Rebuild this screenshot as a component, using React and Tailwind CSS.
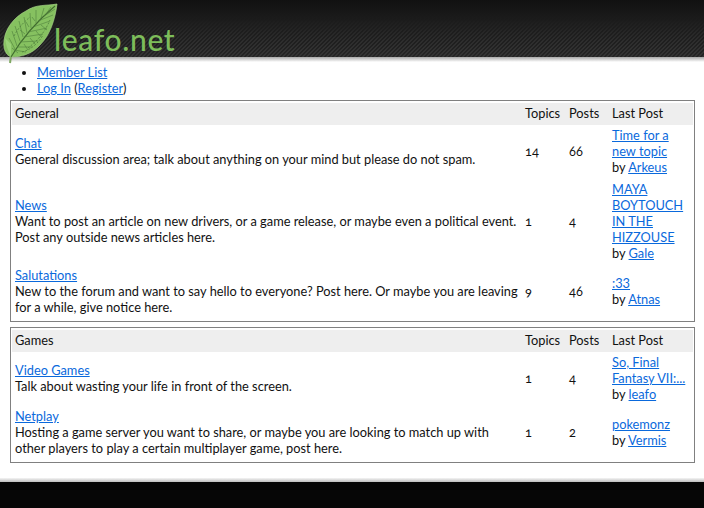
const font = "font-['Lato','Open_Sans',sans-serif]";

function Leaf() {
  const veins = [
    "M15 49 L9 38", "M17 46 L12 31", "M20 41 L15 26", "M23 37 L19 21", "M27 33 L24 17", "M31 28 L30 13", "M36 23 L36 10", "M41 18 L44 8", "M46 14 L51 7",
    "M14 50 L26 52", "M17 47 L32 47", "M20 42 L38 41", "M24 37 L43 34", "M28 32 L47 28", "M33 27 L50 21", "M38 21 L53 15", "M44 16 L55 9",
    "M12 48 L18 53", "M24 44 L28 50", "M30 38 L35 44", "M36 31 L41 37", "M41 25 L47 30", "M20 30 L25 34", "M26 22 L29 27", "M32 17 L35 21",
  ];
  return (
    <svg width="60" height="66" viewBox="0 0 60 66" className="absolute left-0 top-0 z-10">
      <path d="M10 63 L11 56" stroke="#7fa862" strokeWidth="2" fill="none" />
      <path d="M57 4 C46 6 36 4 26 11 C14 17 5 29 4 41 C3 49 6 55 11 57 C21 57 32 54 40 45 C50 35 55 20 57 4 Z" fill="#86c160" stroke="#a5d485" strokeWidth="0.7" />
      <path d="M11 57 C8 50 6 46 5 38 L11 44 Z" fill="#9ad277" />
      <path d="M11 57 C18 45 30 27 55 6" stroke="#3f6a2e" strokeWidth="1.1" fill="none" />
      {veins.map((d) => (
        <path key={d} d={d} stroke="#4f7f3c" strokeWidth="0.8" fill="none" opacity="0.75" />
      ))}
      <path d="M22 52 C30 50 38 44 43 35 M14 36 C18 28 24 22 30 17 M28 48 C36 42 44 34 50 20" stroke="#4f7f3c" strokeWidth="0.8" strokeDasharray="2 1.5" fill="none" />
    </svg>
  );
}

function A({ children }) {
  return <a href="#" className="text-[#0a69dc] underline">{children}</a>;
}

const cell = "pl-[3px] pr-[3px] pt-[2px] pb-[4px] align-middle";
const headCell = "pl-[3px] pr-[3px] pt-[2px] pb-[4px] text-left font-normal";

function Row({ title, desc, topics, posts, last, by }) {
  return (
    <tr>
      <td className={cell}>
        <div><A>{title}</A></div>
        <div>{desc}</div>
      </td>
      <td className={`${cell} oldstyle-nums`}>{topics}</td>
      <td className={`${cell} oldstyle-nums`}>{posts}</td>
      <td className={cell}>
        <div><A>{last}</A></div>
        <div>by <A>{by}</A></div>
      </td>
    </tr>
  );
}

function Forum({ name, children }) {
  return (
    <div className="border border-[#808080] pt-[2px] px-[1px] pb-[2px]">
      <table className="w-full border-collapse table-fixed">
        <colgroup>
          <col />
          <col className="w-[44px]" />
          <col className="w-[43px]" />
          <col className="w-[84px]" />
        </colgroup>
        <thead>
          <tr className="bg-[#eeeeee]">
            <th className={headCell}>{name}</th>
            <th className={headCell}>Topics</th>
            <th className={headCell}>Posts</th>
            <th className={headCell}>Last Post</th>
          </tr>
        </thead>
        <tbody>{children}</tbody>
      </table>
    </div>
  );
}

export default function App() {
  return (
    <div className={`${font} min-h-[508px] bg-white text-[12.8px] leading-[16px] text-[#111111] flex flex-col`}>
      <header className="relative">
        <div className="h-[57px] bg-[linear-gradient(to_bottom,#111111_0px,#1e1e1e_24px,#2c2c2c_57px)] relative overflow-hidden">
          <div className="absolute inset-0 bg-[repeating-linear-gradient(135deg,rgba(0,0,0,0.16)_0px,rgba(0,0,0,0.16)_1.41px,rgba(255,255,255,0.04)_1.41px,rgba(255,255,255,0.04)_2.83px)] [mask-image:linear-gradient(to_bottom,transparent_18px,black_40px)]" />
          <span className="absolute left-[54px] top-[20px] text-[30px] leading-[38px] font-medium text-[#7dbd5a] tracking-[0.65px]">leafo.net</span>
        </div>
        <div className="h-[5px] bg-[linear-gradient(to_bottom,#a8a8a8,#ffffff)]" />
        <Leaf />
      </header>

      <ul className="list-disc pl-[37px] mt-[2px] mb-[4px]">
        <li><A>Member List</A></li>
        <li><A>Log In</A> (<A>Register</A>)</li>
      </ul>

      <main className="ml-[10px] mr-[9px] flex flex-col gap-[5px]">
        <Forum name="General">
          <Row title="Chat" desc="General discussion area; talk about anything on your mind but please do not spam." topics="14" posts="66" last="Time for a new topic" by="Arkeus" />
          <Row title="News" desc="Want to post an article on new drivers, or a game release, or maybe even a political event. Post any outside news articles here." topics="1" posts="4" last="MAYA BOYTOUCH IN THE HIZZOUSE" by="Gale" />
          <Row title="Salutations" desc="New to the forum and want to say hello to everyone? Post here. Or maybe you are leaving for a while, give notice here." topics="9" posts="46" last=":33" by="Atnas" />
        </Forum>
        <Forum name="Games">
          <Row title="Video Games" desc="Talk about wasting your life in front of the screen." topics="1" posts="4" last="So, Final Fantasy VII:..." by="leafo" />
          <Row title="Netplay" desc="Hosting a game server you want to share, or maybe you are looking to match up with other players to play a certain multiplayer game, post here." topics="1" posts="2" last="pokemonz" by="Vermis" />
        </Forum>
      </main>

      <footer className="mt-[15px] flex-1 flex flex-col">
        <div className="h-[4px] bg-[linear-gradient(to_bottom,#f4f4f4,#bdbdbd)]" />
        <div className="flex-1 bg-[#060606]" />
      </footer>
    </div>
  );
}
